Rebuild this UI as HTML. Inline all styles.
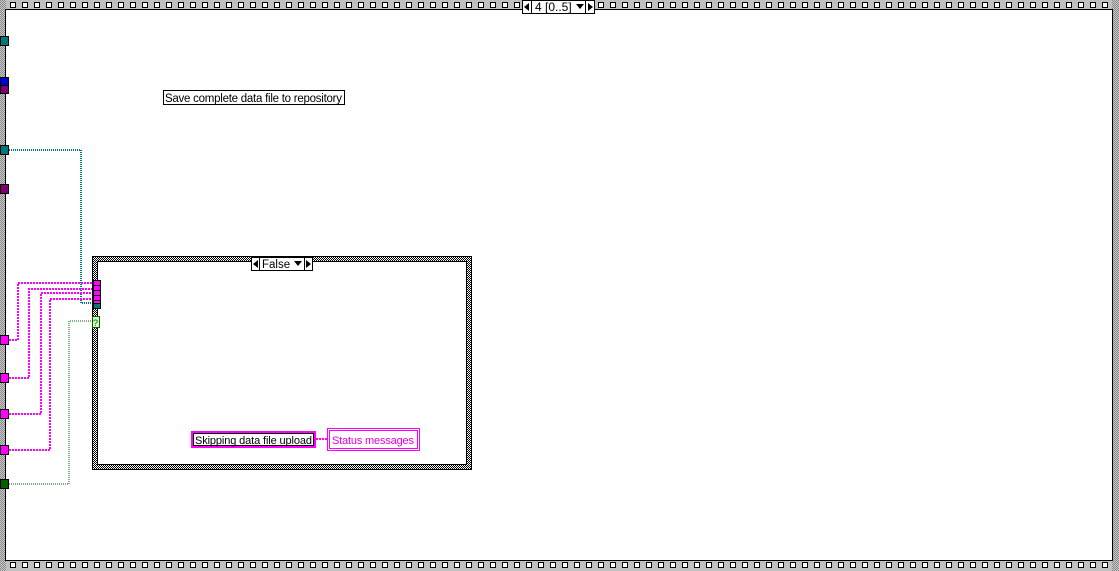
<!DOCTYPE html>
<html><head><style>html,body{margin:0;padding:0;background:#fff;overflow:hidden}</style></head>
<body>
<svg width="1119" height="571" xmlns="http://www.w3.org/2000/svg" style="display:block;font-family:'Liberation Sans',sans-serif">
<defs>
<pattern id="chk" width="2" height="2" patternUnits="userSpaceOnUse"><rect width="2" height="2" fill="#fff"/><rect width="1" height="1" fill="#000"/><rect x="1" y="1" width="1" height="1" fill="#000"/></pattern>
<pattern id="gchk" width="2" height="2" patternUnits="userSpaceOnUse"><rect width="2" height="2" fill="#c8c8c8"/><rect width="1" height="1" fill="#888"/><rect x="1" y="1" width="1" height="1" fill="#888"/></pattern>
<pattern id="film" x="4" width="12" height="10" patternUnits="userSpaceOnUse"><rect width="12" height="10" fill="#c0c0c0"/><rect x="6.5" y="2.5" width="5" height="5" fill="#fff" stroke="#000"/></pattern>
</defs>
<rect width="1119" height="571" fill="#fff"/>
<rect x="0" y="0" width="1119" height="10" fill="url(#film)"/>
<rect x="0" y="561" width="1119" height="10" fill="url(#film)"/>
<rect x="0" y="0" width="6" height="571" fill="url(#gchk)"/>
<rect x="1112" y="0" width="7" height="571" fill="url(#gchk)"/>
<rect x="5.5" y="9.5" width="1107" height="551" fill="#fff" stroke="#000"/>
<rect x="522.5" y="0.5" width="72" height="13" fill="#fff" stroke="#000"/>
<line x1="531.5" y1="0" x2="531.5" y2="14" stroke="#000"/>
<line x1="585.5" y1="0" x2="585.5" y2="14" stroke="#000"/>
<polygon points="524,7 529,3 529,11" fill="#000"/>
<polygon points="588,3 593,7 588,11" fill="#000"/>
<polygon points="576,4 584,4 580,9" fill="#000"/>
<text x="535" y="11" font-size="12">4 [0..5]</text>
<rect x="0.5" y="36.5" width="8" height="9" fill="#007878" stroke="#000"/>
<rect x="0.5" y="77.5" width="8" height="9" fill="#0000e0" stroke="#000"/>
<rect x="0.5" y="85.5" width="8" height="8" fill="#800070" stroke="#000"/>
<rect x="0.5" y="145.5" width="8" height="9" fill="#007878" stroke="#000"/>
<rect x="0.5" y="184.5" width="8" height="9" fill="#800070" stroke="#000"/>
<rect x="0.5" y="335.5" width="8" height="9" fill="#ff00ff" stroke="#000"/>
<rect x="0.5" y="373.5" width="8" height="9" fill="#ff00ff" stroke="#000"/>
<rect x="0.5" y="409.5" width="8" height="9" fill="#ff00ff" stroke="#000"/>
<rect x="0.5" y="445.5" width="8" height="9" fill="#ff00ff" stroke="#000"/>
<rect x="0.5" y="479.5" width="8" height="9" fill="#006000" stroke="#000"/>
<rect x="163.5" y="90.5" width="181" height="14" fill="#fff" stroke="#000"/>
<text x="165" y="102" font-size="11.5" textLength="177">Save complete data file to repository</text>
<polyline points="9,150 81,150 81,303 93,303" fill="none" stroke="#007878" stroke-width="2" stroke-dasharray="1,1"/>
<g fill="none" stroke="#ff00ff" stroke-width="2" stroke-dasharray="2,1">
<polyline points="9,340 18,340 18,283 93,283"/>
<polyline points="9,378 29,378 29,289 93,289"/>
<polyline points="9,414 41,414 41,293 93,293"/>
<polyline points="9,450 50,450 50,299 93,299"/>
</g>
<polyline points="9,484 69,484 69,321 92,321" fill="none" stroke="#006000" stroke-width="1" stroke-dasharray="1,1"/>
<rect x="92" y="256" width="380" height="214" fill="url(#chk)"/>
<rect x="97.5" y="261.5" width="369" height="203" fill="#fff" stroke="#000"/>
<rect x="92.5" y="256.5" width="379" height="213" fill="none" stroke="#000"/>
<rect x="251.5" y="257.5" width="61" height="13" fill="#fff" stroke="#000"/>
<line x1="259.5" y1="257" x2="259.5" y2="271" stroke="#000"/>
<line x1="304.5" y1="257" x2="304.5" y2="271" stroke="#000"/>
<polygon points="253,264 258,260 258,268" fill="#000"/>
<polygon points="306,260 311,264 306,268" fill="#000"/>
<polygon points="294,261 302,261 298,266" fill="#000"/>
<text x="262" y="268" font-size="11.5">False</text>
<rect x="93.5" y="280.5" width="7" height="5" fill="#ff00ff" stroke="#000"/>
<rect x="93.5" y="285.5" width="7" height="5" fill="#ff00ff" stroke="#000"/>
<rect x="93.5" y="290.5" width="7" height="5" fill="#ff00ff" stroke="#000"/>
<rect x="93.5" y="295.5" width="7" height="5" fill="#ff00ff" stroke="#000"/>
<rect x="93.5" y="300.5" width="7" height="3" fill="#ff00ff" stroke="#000"/>
<rect x="93.5" y="303.5" width="7" height="5" fill="#007878" stroke="#000"/>
<rect x="92.5" y="316.5" width="7" height="11" fill="#d8f8c0" stroke="#006000"/>
<text x="93" y="326" font-size="9" fill="#006000">?</text>
<rect x="191" y="431" width="125" height="17" fill="#ff00ff"/>
<rect x="193.5" y="433.5" width="120" height="12" fill="#fff" stroke="#000"/>
<text x="195" y="444" font-size="11" textLength="117">Skipping data file upload</text>
<line x1="316" y1="439" x2="327" y2="439" stroke="#ff00ff" stroke-width="2" stroke-dasharray="2,1"/>
<rect x="327.5" y="428.5" width="92" height="22" fill="#fff" stroke="#ff00ff"/>
<rect x="329.5" y="430.5" width="88" height="18" fill="#fff" stroke="#ff00ff"/>
<text x="332" y="444" font-size="11" fill="#e000e0" textLength="82">Status messages</text>
</svg>
</body></html>
